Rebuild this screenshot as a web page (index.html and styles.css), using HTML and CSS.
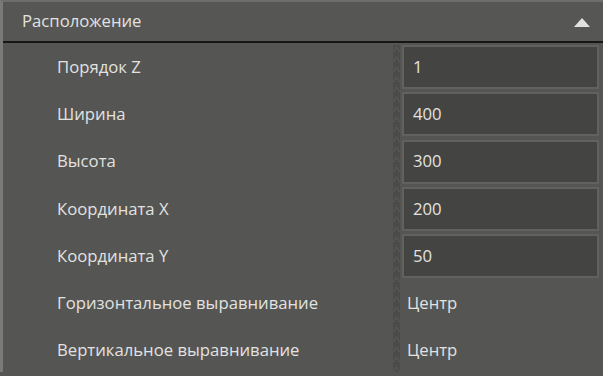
FILE: index.html
```html
<!DOCTYPE html>
<html lang="ru">

<head>
  <meta charset="UTF-8">
  <title>Расположение</title>
  <link rel="stylesheet" href="styles.css">
</head>

<body>
  <div class="panel">
    <div class="panel-header">
      <span class="panel-title">Расположение</span>
      <svg class="toggle" width="16" height="9" viewBox="0 0 16 9">
        <polygon points="8,0 16,9 0,9" fill="#e2e2e0" />
      </svg>
    </div>
    <div class="panel-body">
      <div class="labels">
        <div class="row">Порядок Z</div>
        <div class="row">Ширина</div>
        <div class="row">Высота</div>
        <div class="row">Координата X</div>
        <div class="row">Координата Y</div>
        <div class="row">Горизонтальное выравнивание</div>
        <div class="row">Вертикальное выравнивание</div>
      </div>
      <div class="splitter">
        <svg width="7" height="100%">
          <defs>
            <pattern id="chev" width="7" height="10" patternUnits="userSpaceOnUse">
              <polyline points="0.5,7 3.5,2 6.5,7" fill="none" stroke="#5c5c5a" stroke-width="1" />
            </pattern>
          </defs>
          <rect width="7" height="100%" fill="url(#chev)" />
        </svg>
      </div>
      <div class="values">
        <div class="row"><div class="field">1</div></div>
        <div class="row"><div class="field">400</div></div>
        <div class="row"><div class="field">300</div></div>
        <div class="row"><div class="field">200</div></div>
        <div class="row"><div class="field">50</div></div>
        <div class="row"><span class="plain">Центр</span></div>
        <div class="row"><span class="plain">Центр</span></div>
      </div>
    </div>
  </div>
</body>

</html>
```

FILE: styles.css
```css
body {
  margin: 0;
  background-color: #555553;
  font-family: "Open Sans", "Noto Sans", sans-serif;
  font-size: 16.7px;
  color: #e2e2e0;
}

.panel {
  border-left: 3px solid #7a7a78;
  border-top: 2px solid #6e6e6c;
  height: 370px;
  background-color: #555553;
}

.panel-header {
  display: flex;
  align-items: center;
  justify-content: space-between;
  height: 39px;
  padding: 0 13px 0 19px;
  border-bottom: 2px solid #161616;
  background-color: #565654;
}

.panel-title {
  margin-top: -3px;
}

.toggle {
  margin-top: 2px;
}

.panel-body {
  display: flex;
  padding-top: 2px;
}

.labels {
  width: 390px;
  padding-left: 54px;
  box-sizing: border-box;
}

.row {
  height: 47.3px;
  display: flex;
  align-items: center;
}

.labels .row {
  padding-bottom: 5px;
  box-sizing: border-box;
}

.splitter {
  width: 7px;
  background-color: #4b4b49;
  margin-right: 2px;
  display: flex;
}

.values {
  flex: 1;
  padding-right: 4px;
}

.values .row {
  padding-bottom: 3px;
  box-sizing: border-box;
}

.field {
  flex: 1;
  height: 44px;
  box-sizing: border-box;
  border: 2px solid #616160;
  background-color: #444442;
  display: flex;
  align-items: center;
  padding: 0 0 2px 9px;
}

.plain {
  padding-left: 5px;
  padding-bottom: 2px;
}
```
